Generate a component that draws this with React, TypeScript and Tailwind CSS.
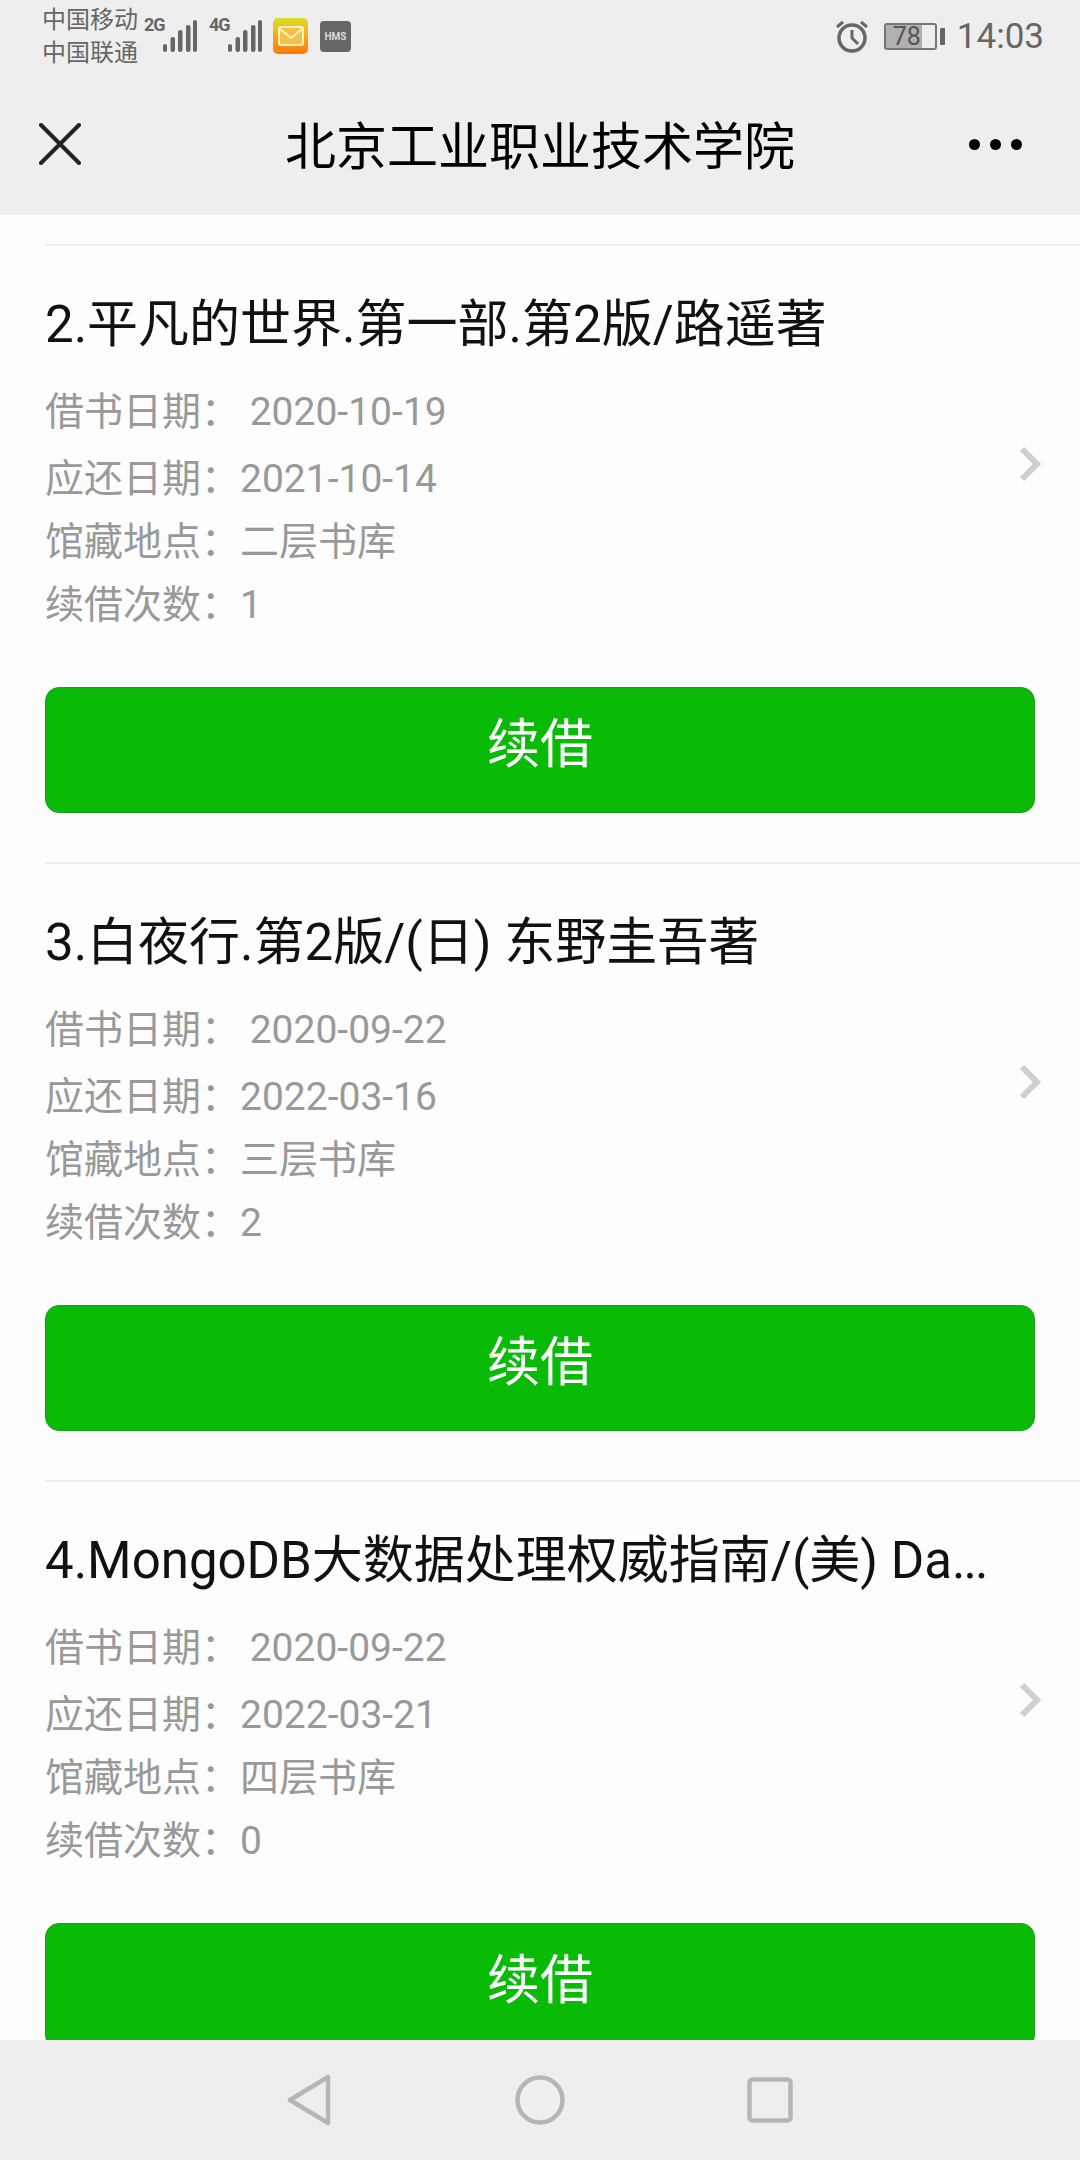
import React from 'react';

const books = [
  { title: '2.平凡的世界.第一部.第2版/路遥著', more: '', borrow: '2020-10-19', due: '2021-10-14', place: '二层书库', times: '1' },
  { title: '3.白夜行.第2版/(日) 东野圭吾著', more: '', borrow: '2020-09-22', due: '2022-03-16', place: '三层书库', times: '2' },
  { title: '4.MongoDB大数据处理权威指南/(美) Da', more: '...', borrow: '2020-09-22', due: '2022-03-21', place: '四层书库', times: '0' },
];

function Signal({ label }: { label: string }) {
  return (
    <div className="flex items-start">
      <div className="w-[19px] pt-[15px] text-[18px] font-bold leading-[20px] tracking-[-1px] text-[#666] font-['Roboto',sans-serif] whitespace-nowrap">{label}</div>
      <svg width="34" height="34" viewBox="0 0 34 34" className="mt-[19px]">
        <rect x="0" y="25" width="4" height="8" rx="2" fill="#666" />
        <rect x="7.5" y="18" width="4.5" height="15" rx="2" fill="#666" />
        <rect x="15" y="11" width="4.5" height="22" rx="2" fill="#666" />
        <rect x="23" y="6" width="4.5" height="27" rx="2" fill="#666" />
        <rect x="30" y="1" width="4" height="32" rx="2" fill="#666" />
      </svg>
    </div>
  );
}

function StatusBar() {
  return (
    <div className="flex h-[72px] items-start pl-[42px] pr-[36px] text-[#666]">
      <div className="w-[102px] pt-[4px] text-[24px] leading-[33px] whitespace-nowrap">
        <div>中国移动</div>
        <div>中国联通</div>
      </div>
      <Signal label="2G" />
      <div className="w-[12px]" />
      <Signal label="4G" />
      <div className="ml-[11px] mt-[18px] flex h-[36px] w-[35px] items-center justify-center rounded-[5px] bg-gradient-to-b from-[#d8dc28] via-[#f7a81c] to-[#f97a08]">
        <svg width="26" height="20" viewBox="0 0 26 20">
          <rect x="1" y="1" width="24" height="18" rx="2" fill="#f5c04a" stroke="#fff3c0" strokeWidth="2" />
          <path d="M2 3l11 9 11-9" fill="none" stroke="#fff3c0" strokeWidth="2" />
        </svg>
      </div>
      <div className="ml-[12px] mt-[21px] flex h-[31px] w-[31px] items-center justify-center rounded-[4px] bg-[#666] text-[10px] font-bold text-[#ddd] font-['Roboto',sans-serif]">HMS</div>
      <div className="ml-auto mt-[19px]">
        <svg width="34" height="34" viewBox="0 0 34 34" fill="none" stroke="#666">
          <circle cx="17" cy="19" r="13" strokeWidth="3.5" />
          <path d="M17 11v8l6 6" strokeWidth="3" />
          <path d="M2 8l6-5M32 8l-6-5" strokeWidth="3" />
        </svg>
      </div>
      <div className="ml-[15px] mt-[23px] flex items-center">
        <div className="relative h-[27px] w-[53px] overflow-hidden rounded-[3px] border-2 border-[#777]">
          <div className="h-full w-[36px] bg-[#b0b0b0]" />
          <div className="absolute inset-0 text-center text-[25px] leading-[23px] pr-[7px] text-[#555]">78</div>
        </div>
        <div className="ml-[3px] h-[17px] w-[5px] rounded-[1px] bg-[#666]" />
      </div>
      <div className="ml-[12px] mt-[17px] text-[35px] leading-[40px]">14:03</div>
    </div>
  );
}

function NavBar() {
  return (
    <div className="flex h-[143px] items-start pl-[39px] pr-[58px]">
      <svg width="42" height="42" viewBox="0 0 42 42" className="mt-[51px]" stroke="#222" strokeWidth="4" strokeLinecap="round">
        <path d="M2 2l38 38M40 2L2 40" />
      </svg>
      <div className="flex-1 pt-[46px] pl-[30px] text-center text-[51px] leading-[60px] text-black">北京工业职业技术学院</div>
      <div className="mt-[67px] flex gap-[10px]">
        <div className="h-[11px] w-[11px] rounded-full bg-black" />
        <div className="h-[11px] w-[11px] rounded-full bg-black" />
        <div className="h-[11px] w-[11px] rounded-full bg-black" />
      </div>
    </div>
  );
}

function BookItem({ book }: { book: (typeof books)[number] }) {
  return (
    <div className="ml-[45px] h-[618px] border-t-2 border-[#efefef] pr-[45px] pt-[49px]">
      <div className="text-[51px] leading-[60px] text-[#111] whitespace-nowrap">
        {book.title}
        <span className="tracking-[-2px]">{book.more}</span>
      </div>
      <div className="mt-[26px] flex">
        <div className="flex-1 text-[39px] leading-[62px] text-[#999]">
          <div className="mb-[5px]">借书日期： {book.borrow}</div>
          <div className="mb-[1px]">应还日期：{book.due}</div>
          <div className="mb-[1px]">馆藏地点：{book.place}</div>
          <div>续借次数：{book.times}</div>
        </div>
        <svg width="24" height="36" viewBox="0 0 24 36" className="mt-[65px] -mr-[7px]" fill="none" stroke="#d0d0d0" strokeWidth="6">
          <path d="M4 3l15 15L4 33" />
        </svg>
      </div>
      <button className="mt-[51px] h-[126px] w-full rounded-[14px] border border-[#1c9c1c] bg-[#09bb07] pb-[8px] text-[53px] text-white">续借</button>
    </div>
  );
}

function BottomBar() {
  return (
    <div className="flex h-[120px] shrink-0 items-start bg-[#eeeeee] pt-[34px] pl-[287px]">
      <svg width="44" height="52" viewBox="0 0 44 52" fill="none" stroke="#b6b6b6" strokeWidth="4.5" strokeLinejoin="round">
        <path d="M41 3v46L3 26z" />
      </svg>
      <svg width="50" height="50" viewBox="0 0 50 50" fill="none" stroke="#b6b6b6" strokeWidth="4.5" className="ml-[184px] mt-[1px]">
        <circle cx="25" cy="25" r="22.5" />
      </svg>
      <svg width="46" height="46" viewBox="0 0 46 46" fill="none" stroke="#b6b6b6" strokeWidth="4.5" className="ml-[182px] mt-[3px]">
        <rect x="2.5" y="2.5" width="41" height="41" rx="3" />
      </svg>
    </div>
  );
}

export default function App() {
  return (
    <div className="flex h-[2160px] w-[1080px] flex-col overflow-hidden bg-[#fdfdfd] font-['Roboto','Noto_Sans_CJK_SC',sans-serif]">
      <div className="h-[215px] shrink-0 bg-[#eeeeee]">
        <StatusBar />
        <NavBar />
      </div>
      <div className="flex-1 overflow-hidden pt-[29px]">
        {books.map(book => (
          <BookItem key={book.title} book={book} />
        ))}
      </div>
      <BottomBar />
    </div>
  );
}
